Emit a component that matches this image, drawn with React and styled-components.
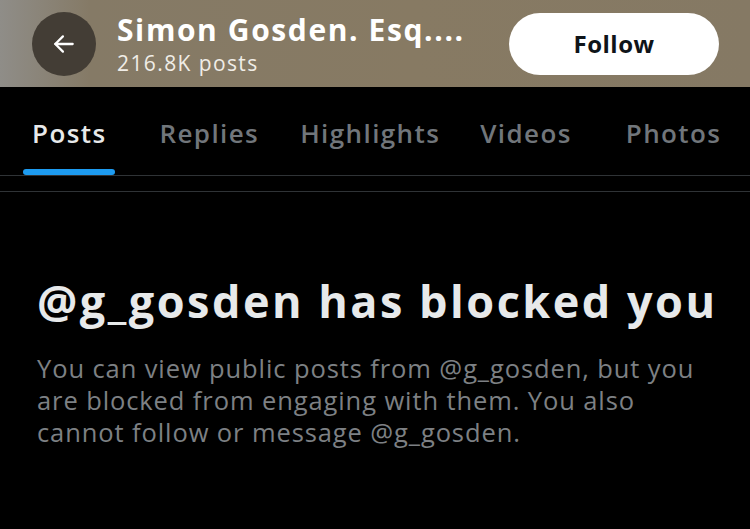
import React from 'react';
import styled, { createGlobalStyle } from 'styled-components';

const GlobalStyle = createGlobalStyle`
  html, body {
    margin: 0;
    padding: 0;
    background: #000;
  }
  body {
    font-family: "Open Sans", Roboto, "Liberation Sans", sans-serif;
    -webkit-font-smoothing: antialiased;
  }
`;

const Page = styled.div`
  width: 750px;
  height: 529px;
  background: #000;
  overflow: hidden;
`;

const Header = styled.header`
  height: 87px;
  display: flex;
  align-items: center;
  padding: 0 32px;
  box-sizing: border-box;
  background: linear-gradient(90deg, #8f8d88 0%, #857a66 12%, #877a63 55%, #857964 100%);
`;

const BackButton = styled.button`
  width: 64px;
  height: 64px;
  border-radius: 50%;
  border: none;
  padding: 0;
  background: #433d35;
  display: flex;
  align-items: center;
  justify-content: center;
  flex-shrink: 0;
  margin-top: 1px;
`;

const Titles = styled.div`
  display: flex;
  flex-direction: column;
  margin-left: 21px;
  flex: 1;
  min-width: 0;
`;

const Name = styled.div`
  font-size: 30px;
  font-weight: 700;
  color: #fff;
  line-height: 32px;
  letter-spacing: 1.6px;
  white-space: nowrap;
`;

const PostCount = styled.div`
  margin-top: 6px;
  font-size: 21px;
  color: #f0ede7;
  line-height: 22px;
  letter-spacing: 1.4px;
`;

const FollowButton = styled.button`
  width: 210px;
  height: 62px;
  border-radius: 31px;
  border: none;
  background: #fff;
  color: #0f1419;
  font-family: inherit;
  font-size: 24px;
  font-weight: 700;
  letter-spacing: 0.5px;
  flex-shrink: 0;
  margin-right: -1px;
`;

const Tabs = styled.nav`
  display: flex;
  height: 89px;
  border-bottom: 1px solid #2f3336;
  box-sizing: border-box;
  padding: 28px 0 0 32px;
`;

const Tab = styled.div`
  position: relative;
  margin-left: ${p => p.$gap}px;
  font-size: 26px;
  font-weight: 600;
  letter-spacing: 1.4px;
  color: ${p => (p.$active ? '#e7e9ea' : '#71767b')};
  white-space: nowrap;
`;

const Indicator = styled.div`
  position: absolute;
  top: 54px;
  left: -9px;
  width: 92px;
  height: 6px;
  border-radius: 3px;
  background: #1d9bf0;
`;

const Gap = styled.div`
  height: 15px;
  border-bottom: 1px solid #2f3336;
`;

const Blocked = styled.section`
  padding: 84px 37px 0;
`;

const Heading = styled.h1`
  margin: 0;
  font-size: 45px;
  font-weight: 700;
  color: #e7e9ea;
  line-height: 50px;
  letter-spacing: 2.5px;
  white-space: nowrap;
`;

const Body = styled.p`
  margin: 26px 0 0;
  font-size: 25.5px;
  line-height: 32px;
  letter-spacing: 0.9px;
  color: #7d8084;
  width: 680px;
`;

const tabs = [
  { label: 'Posts', gap: 0, active: true },
  { label: 'Replies', gap: 53 },
  { label: 'Highlights', gap: 41 },
  { label: 'Videos', gap: 40 },
  { label: 'Photos', gap: 54 },
];

export default function App() {
  return (
    <Page>
      <GlobalStyle />
      <Header>
        <BackButton aria-label="Back">
          <svg width="26" height="26" viewBox="0 0 24 24" fill="none" stroke="#fff" strokeWidth="2.1" strokeLinecap="round" strokeLinejoin="round">
            <path d="M20 12H4" />
            <path d="M11 5l-7 7 7 7" />
          </svg>
        </BackButton>
        <Titles>
          <Name>Simon Gosden. Esq....</Name>
          <PostCount>216.8K posts</PostCount>
        </Titles>
        <FollowButton>Follow</FollowButton>
      </Header>
      <Tabs>
        {tabs.map(t => (
          <Tab key={t.label} $active={t.active} $gap={t.gap}>
            {t.label}
            {t.active && <Indicator />}
          </Tab>
        ))}
      </Tabs>
      <Gap />
      <Blocked>
        <Heading>@g_gosden has blocked you</Heading>
        <Body>
          You can view public posts from @g_gosden, but you are blocked from engaging with them. You also cannot follow or message @g_gosden.
        </Body>
      </Blocked>
    </Page>
  );
}
